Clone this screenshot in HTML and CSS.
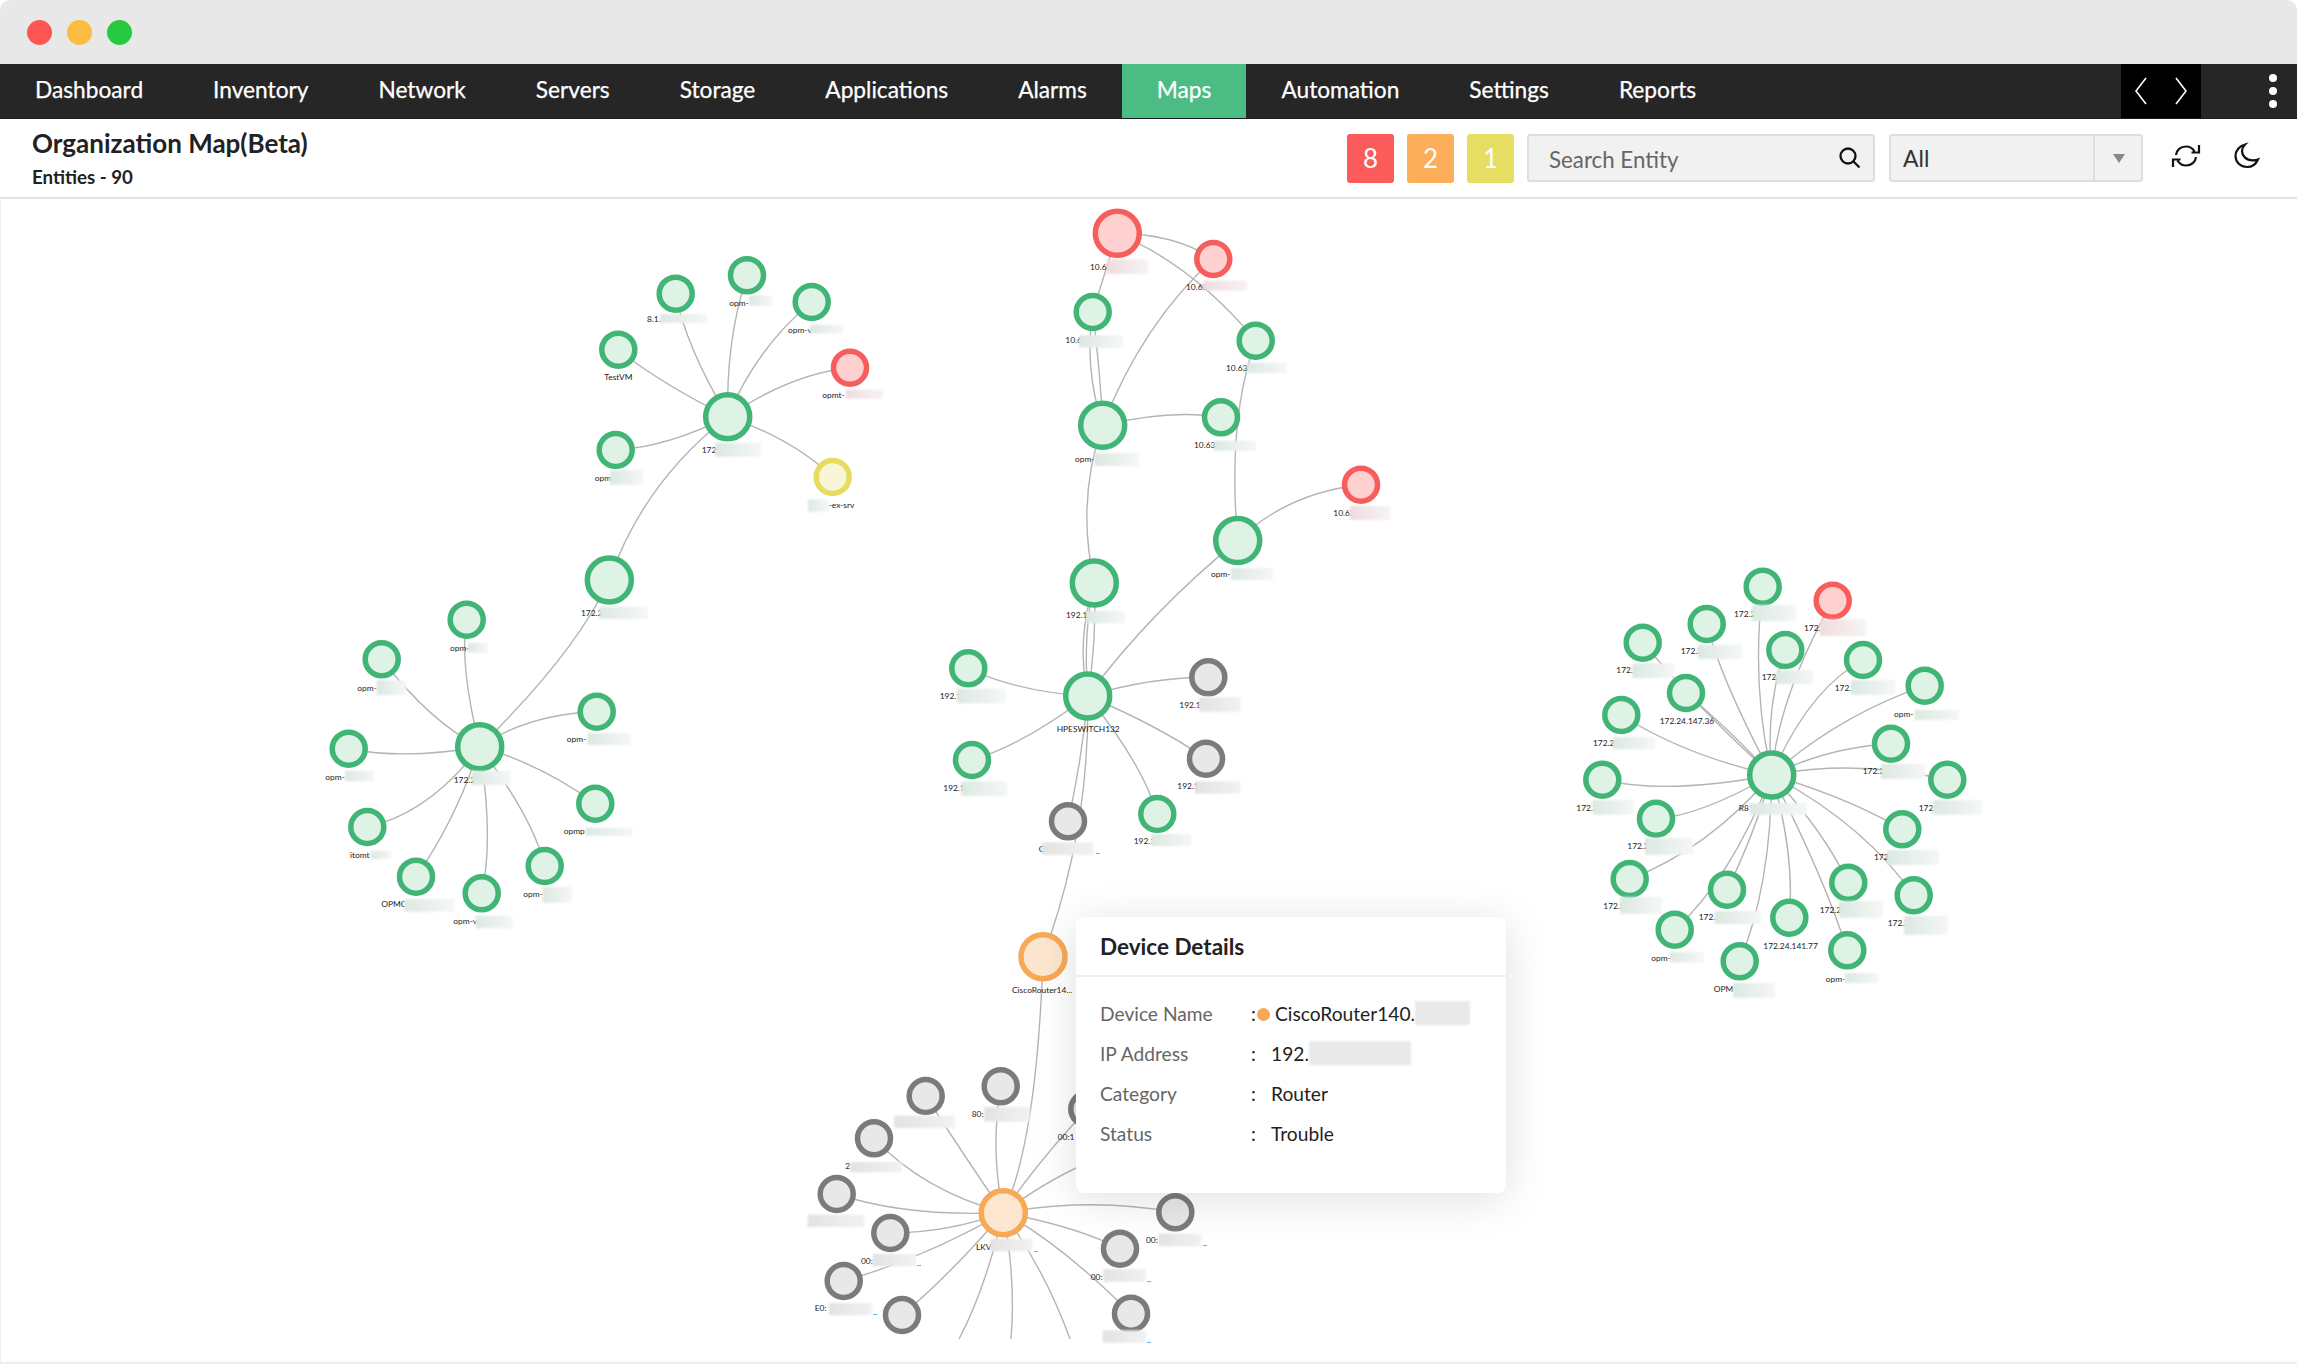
FILE: index.html
```html
<!DOCTYPE html>
<html lang="en">
<head>
<meta charset="utf-8">
<title>Organization Map(Beta)</title>
<link rel="stylesheet" href="styles.css">
</head>
<body>
<div class="window">
  <header class="titlebar">
    <span class="light light-red"></span>
    <span class="light light-amber"></span>
    <span class="light light-green"></span>
  </header>
  <nav class="nav">
    <a class="nav-item">Dashboard</a>
    <a class="nav-item">Inventory</a>
    <a class="nav-item">Network</a>
    <a class="nav-item">Servers</a>
    <a class="nav-item">Storage</a>
    <a class="nav-item">Applications</a>
    <a class="nav-item">Alarms</a>
    <a class="nav-item nav-active">Maps</a>
    <a class="nav-item">Automation</a>
    <a class="nav-item">Settings</a>
    <a class="nav-item">Reports</a>
    <div class="nav-arrows">
      <svg class="chev" viewBox="0 0 16 32"><path d="M13 3 3 16l10 13"/></svg>
      <svg class="chev" viewBox="0 0 16 32"><path d="M3 3l10 13L3 29"/></svg>
    </div>
    <div class="nav-more"><i></i><i></i><i></i></div>
  </nav>
  <section class="toolbar">
    <div class="heading">
      <h1 class="title">Organization Map(Beta)</h1>
      <p class="count">Entities - 90</p>
    </div>
    <div class="tools">
      <span class="badge badge-red">8</span>
      <span class="badge badge-orange">2</span>
      <span class="badge badge-yellow">1</span>
      <div class="search">
        <span>Search Entity</span>
        <svg class="search-icon" viewBox="0 0 22 22"><circle cx="9" cy="9" r="7.500"/><path d="M14.500 14.500 20.500 20.500"/></svg>
      </div>
      <div class="select">
        <span class="select-value">All</span>
        <span class="select-caret"></span>
      </div>
      <svg class="tool-icon refresh" viewBox="0 0 30 30"><path d="M5 14C5.500 9 9.500 5.500 15 5.500c3.500 0 6.500 1.500 8.500 5M25 16c-.5 5-4.500 8.500-10 8.500-3.500 0-6.500-1.500-8.500-5M28 4v7.500h-7.500M2 26v-7.500h7.500"/></svg>
      <svg class="tool-icon moon" viewBox="0 0 30 30"><path d="M13 3.500C7.500 5 3.500 9.500 3.500 15c0 6 5 11 11.500 11 5.500 0 9-3 11-7.500-2 .8-4 .8-5.500.8C14 19.300 10 14.500 10 10c0-2.500 1-4.500 3-6.500z"/></svg>
    </div>
  </section>
  <main class="map">
    <svg class="graph" viewBox="0 199 2297 1165" xmlns="http://www.w3.org/2000/svg">
      <defs>
        <linearGradient id="fade-g" x1="0" x2="1" y1="0" y2="0"><stop offset="0" stop-color="#dce8e2"/><stop offset="1" stop-color="#f5f7f6"/></linearGradient>
        <linearGradient id="fade-r" x1="0" x2="1" y1="0" y2="0"><stop offset="0" stop-color="#f0dcdd"/><stop offset="1" stop-color="#f6f4f4"/></linearGradient>
        <linearGradient id="fade-k" x1="0" x2="1" y1="0" y2="0"><stop offset="0" stop-color="#e2e2e2"/><stop offset="1" stop-color="#f2f2f2"/></linearGradient>
        <filter id="soft"><feGaussianBlur stdDeviation="1"/></filter>
      </defs>

      <g class="edges">
        <!-- top-left cluster -->
        <path d="M675.700 293.700Q685 345 727.700 416.700"/>
        <path d="M747 275.300Q726 340 727.700 416.700"/>
        <path d="M811.700 302Q757 347 727.700 416.700"/>
        <path d="M618.300 349.700Q660 383 727.700 416.700"/>
        <path d="M850 367.700Q790 374 727.700 416.700"/>
        <path d="M615.700 450Q668 447 727.700 416.700"/>
        <path d="M832.700 477Q793 439 727.700 416.700"/>
        <path d="M727.700 416.700Q643.500 482 609.300 580"/>
        <path d="M609.300 580Q575.500 653 479.700 746.700"/>
        <!-- left cluster -->
        <path d="M466.700 619.700Q459 664 479.700 746.700"/>
        <path d="M381.700 659.300Q431 723 479.700 746.700"/>
        <path d="M348.700 748.700Q406 760 479.700 746.700"/>
        <path d="M367.300 827Q430 813 479.700 746.700"/>
        <path d="M416 876.700Q456 820 479.700 746.700"/>
        <path d="M481.700 893.300Q494 840 479.700 746.700"/>
        <path d="M544.700 866Q534 820 479.700 746.700"/>
        <path d="M595.300 803.700Q543 765 479.700 746.700"/>
        <path d="M596.700 711.700Q528 714 479.700 746.700"/>
        <!-- centre chain -->
        <path d="M1117.300 233.300Q1175 234 1213.300 259"/>
        <path d="M1117.300 233.300Q1194 266 1255.700 340.700"/>
        <path d="M1117.300 233.300L1092.700 312"/>
        <path d="M1213.300 259Q1142 324 1102.700 425.300"/>
        <path d="M1092.700 312Q1084 368 1102.700 425.300"/>
        <path d="M1092.700 312Q1100 368 1102.700 425.300"/>
        <path d="M1102.700 425.300Q1171 409 1221 417.300"/>
        <path d="M1255.700 340.700Q1227 420 1237.700 540.600"/>
        <path d="M1237.700 540.600Q1287 493 1361 484.700"/>
        <path d="M1102.700 425.300Q1076 500 1094.300 583"/>
        <path d="M1094.300 583Q1076 640 1087.700 696"/>
        <path d="M1094.300 583Q1097 640 1087.700 696"/>
        <path d="M1094.300 583Q1083 630 1087.700 696"/>
        <path d="M1237.700 540.600Q1150 612 1087.700 696"/>
        <path d="M1087.700 696Q1018 692 968.300 668.300"/>
        <path d="M1087.700 696Q1023 745 972 760"/>
        <path d="M1087.700 696Q1082 760 1068 821.300"/>
        <path d="M1087.700 696Q1090 830 1043 956.700"/>
        <path d="M1087.700 696Q1143 765 1157.300 814"/>
        <path d="M1087.700 696Q1159 726 1206 758.700"/>
        <path d="M1087.700 696Q1152 677 1208.300 677.300"/>
        <path d="M1043 956.700Q1037 1141 1003.300 1212.700"/>
        <!-- bottom cluster -->
        <path d="M1003.300 1212.700Q967 1160 925.700 1096"/>
        <path d="M1003.300 1212.700Q990 1150 1000.700 1086.300"/>
        <path d="M1003.300 1212.700Q1035 1165 1087.300 1109"/>
        <path d="M1003.300 1212.700Q1060 1170 1120 1150"/>
        <path d="M1003.300 1212.700Q922 1190 874 1138.300"/>
        <path d="M1003.300 1212.700Q906 1217 836.700 1194"/>
        <path d="M1003.300 1212.700Q947 1233 890.300 1233"/>
        <path d="M1003.300 1212.700Q925 1258 843.700 1281"/>
        <path d="M1003.300 1212.700Q950 1275 902 1315"/>
        <path d="M1003.300 1212.700Q985 1290 959 1339"/>
        <path d="M1003.300 1212.700Q1016 1280 1011 1339"/>
        <path d="M1003.300 1212.700Q1045 1270 1070 1339"/>
        <path d="M1003.300 1212.700Q1078 1227 1120 1248.700"/>
        <path d="M1003.300 1212.700Q1091 1197 1175.300 1212.300"/>
        <path d="M1003.300 1212.700Q1060 1243 1131 1313.700"/>
        <!-- right cluster -->
        <path d="M1762.700 586.700Q1751 685 1771.700 775"/>
        <path d="M1832.700 600.700Q1778 698 1771.700 775"/>
        <path d="M1706.700 624Q1721 680 1771.700 775"/>
        <path d="M1785.300 650Q1765 708 1771.700 775"/>
        <path d="M1642.700 642.700Q1700 710 1771.700 775"/>
        <path d="M1686 693Q1730 730 1771.700 775"/>
        <path d="M1863 660Q1809 689 1771.700 775"/>
        <path d="M1924.700 685.700Q1838 716 1771.700 775"/>
        <path d="M1621.300 715Q1683.500 755 1771.700 775"/>
        <path d="M1891 743.700Q1829 747 1771.700 775"/>
        <path d="M1602.300 779.700Q1666 795 1771.700 775"/>
        <path d="M1947.300 779.700Q1854 759 1771.700 775"/>
        <path d="M1656 818.700Q1699.600 816 1771.700 775"/>
        <path d="M1902.300 829.300Q1849 798 1771.700 775"/>
        <path d="M1629.700 879Q1707 850 1771.700 775"/>
        <path d="M1727 889.700Q1752 840 1771.700 775"/>
        <path d="M1848.300 882.700Q1823 830 1771.700 775"/>
        <path d="M1913.700 895.300Q1865 825 1771.700 775"/>
        <path d="M1789.300 917.700Q1795 854 1771.700 775"/>
        <path d="M1847.300 950.300Q1824 877 1771.700 775"/>
        <path d="M1739.700 961.300Q1771 886 1771.700 775"/>
        <path d="M1674.700 929.700Q1730 880 1771.700 775"/>
      </g>

      <g class="nodes">
        <circle class="hub green" cx="727.700" cy="416.700" r="22"/>
        <circle class="sat green" cx="675.700" cy="293.700" r="16.500"/>
        <circle class="sat green" cx="747" cy="275.300" r="16.500"/>
        <circle class="sat green" cx="811.700" cy="302" r="16.500"/>
        <circle class="sat green" cx="618.300" cy="349.700" r="16.500"/>
        <circle class="sat red" cx="850" cy="367.700" r="16.500"/>
        <circle class="sat green" cx="615.700" cy="450" r="16.500"/>
        <circle class="sat yellow" cx="832.700" cy="477" r="16.500"/>
        <circle class="hub green" cx="609.300" cy="580" r="22"/>

        <circle class="hub green" cx="479.700" cy="746.700" r="22"/>
        <circle class="sat green" cx="466.700" cy="619.700" r="16.500"/>
        <circle class="sat green" cx="381.700" cy="659.300" r="16.500"/>
        <circle class="sat green" cx="348.700" cy="748.700" r="16.500"/>
        <circle class="sat green" cx="367.300" cy="827" r="16.500"/>
        <circle class="sat green" cx="416" cy="876.700" r="16.500"/>
        <circle class="sat green" cx="481.700" cy="893.300" r="16.500"/>
        <circle class="sat green" cx="544.700" cy="866" r="16.500"/>
        <circle class="sat green" cx="595.300" cy="803.700" r="16.500"/>
        <circle class="sat green" cx="596.700" cy="711.700" r="16.500"/>

        <circle class="hub red" cx="1117.300" cy="233.300" r="22"/>
        <circle class="sat red" cx="1213.300" cy="259" r="16.500"/>
        <circle class="sat green" cx="1092.700" cy="312" r="16.500"/>
        <circle class="sat green" cx="1255.700" cy="340.700" r="16.500"/>
        <circle class="hub green" cx="1102.700" cy="425.300" r="22"/>
        <circle class="sat green" cx="1221" cy="417.300" r="16.500"/>
        <circle class="hub green" cx="1237.700" cy="540.600" r="22"/>
        <circle class="sat red" cx="1361" cy="484.700" r="16.500"/>
        <circle class="hub green" cx="1094.300" cy="583" r="22"/>
        <circle class="hub green" cx="1087.700" cy="696" r="22"/>
        <circle class="sat green" cx="968.300" cy="668.300" r="16.500"/>
        <circle class="sat green" cx="972" cy="760" r="16.500"/>
        <circle class="sat gray" cx="1068" cy="821.300" r="16.500"/>
        <circle class="sat green" cx="1157.300" cy="814" r="16.500"/>
        <circle class="sat gray" cx="1206" cy="758.700" r="16.500"/>
        <circle class="sat gray" cx="1208.300" cy="677.300" r="16.500"/>
        <circle class="hub orange" cx="1043" cy="956.700" r="22"/>

        <circle class="hub orange" cx="1003.300" cy="1212.700" r="22"/>
        <circle class="sat gray" cx="925.700" cy="1096" r="16.500"/>
        <circle class="sat gray" cx="1000.700" cy="1086.300" r="16.500"/>
        <circle class="sat gray" cx="1087.300" cy="1109" r="16.500"/>
        <circle class="sat gray" cx="874" cy="1138.300" r="16.500"/>
        <circle class="sat gray" cx="836.700" cy="1194" r="16.500"/>
        <circle class="sat gray" cx="890.300" cy="1233" r="16.500"/>
        <circle class="sat gray" cx="843.700" cy="1281" r="16.500"/>
        <circle class="sat gray" cx="902" cy="1315" r="16.500"/>
        <circle class="sat gray" cx="1120" cy="1248.700" r="16.500"/>
        <circle class="sat gray" cx="1175.300" cy="1212.300" r="16.500"/>
        <circle class="sat gray" cx="1131" cy="1313.700" r="16.500"/>

        <circle class="hub green" cx="1771.700" cy="775" r="22"/>
        <circle class="sat green" cx="1762.700" cy="586.700" r="16.500"/>
        <circle class="sat red" cx="1832.700" cy="600.700" r="16.500"/>
        <circle class="sat green" cx="1706.700" cy="624" r="16.500"/>
        <circle class="sat green" cx="1785.300" cy="650" r="16.500"/>
        <circle class="sat green" cx="1642.700" cy="642.700" r="16.500"/>
        <circle class="sat green" cx="1863" cy="660" r="16.500"/>
        <circle class="sat green" cx="1924.700" cy="685.700" r="16.500"/>
        <circle class="sat green" cx="1686" cy="693" r="16.500"/>
        <circle class="sat green" cx="1621.300" cy="715" r="16.500"/>
        <circle class="sat green" cx="1891" cy="743.700" r="16.500"/>
        <circle class="sat green" cx="1602.300" cy="779.700" r="16.500"/>
        <circle class="sat green" cx="1947.300" cy="779.700" r="16.500"/>
        <circle class="sat green" cx="1656" cy="818.700" r="16.500"/>
        <circle class="sat green" cx="1902.300" cy="829.300" r="16.500"/>
        <circle class="sat green" cx="1629.700" cy="879" r="16.500"/>
        <circle class="sat green" cx="1727" cy="889.700" r="16.500"/>
        <circle class="sat green" cx="1848.300" cy="882.700" r="16.500"/>
        <circle class="sat green" cx="1913.700" cy="895.300" r="16.500"/>
        <circle class="sat green" cx="1789.300" cy="917.700" r="16.500"/>
        <circle class="sat green" cx="1674.700" cy="929.700" r="16.500"/>
        <circle class="sat green" cx="1847.300" cy="950.300" r="16.500"/>
        <circle class="sat green" cx="1739.700" cy="961.300" r="16.500"/>
      </g>

      <g class="labels">
        <text x="647" y="318.700">8.1.</text>
        <text x="729.300" y="303">opm-</text>
        <text x="788" y="330">opm-v</text>
        <text x="604.300" y="377">TestVM</text>
        <text x="822.300" y="395.300">opmt-</text>
        <text x="594.700" y="477.700">opm</text>
        <text x="828.700" y="505">-ex-srv</text>
        <text x="701.700" y="450.300">172</text>
        <text x="581" y="612.700">172.2</text>

        <text x="450" y="647.700">opm-</text>
        <text x="357.300" y="687.700">opm-</text>
        <text x="325.300" y="776.700">opm-</text>
        <text x="350" y="855">itomt</text>
        <text x="381.300" y="904">OPMC</text>
        <text x="453.300" y="921.300">opm-v</text>
        <text x="523.300" y="894">opm-</text>
        <text x="563.700" y="831">opmp</text>
        <text x="566.700" y="739.300">opm-</text>
        <text x="453.700" y="779.700">172.2</text>

        <text x="1090" y="267">10.63</text>
        <text x="1186" y="286.700">10.63</text>
        <text x="1065.300" y="340">10.63</text>
        <text x="1226" y="368.300">10.63</text>
        <text x="1075" y="458.700">opm-</text>
        <text x="1194" y="445">10.63</text>
        <text x="1211" y="574">opm-</text>
        <text x="1333.300" y="512.700">10.63</text>
        <text x="1066" y="615.300">192.1</text>
        <text x="1056.700" y="729.300">HPESWITCH132</text>
        <text x="939.700" y="696">192.1</text>
        <text x="943.300" y="787.700">192.1</text>
        <text x="1038.700" y="849">C</text>
        <text x="1096" y="851">..</text>
        <text x="1133.700" y="841">192.1</text>
        <text x="1177.300" y="786.300">192.1</text>
        <text x="1179.300" y="705">192.1</text>
        <text x="1012" y="990.300">CiscoRouter14...</text>

        <text x="976" y="1246.700">LKV</text>
        <text x="1034" y="1249">..</text>
        <text x="971.700" y="1113.700">80:</text>
        <text x="1057.700" y="1137">00:1</text>
        <text x="845.300" y="1166">2</text>
        <text x="861" y="1260.700">00:</text>
        <text x="917" y="1263">..</text>
        <text x="814.700" y="1308.300">E0:</text>
        <text x="873" y="1312">..</text>
        <text x="1090.700" y="1276.700">00:</text>
        <text x="1147" y="1279">..</text>
        <text x="1146" y="1240">00:</text>
        <text x="1203" y="1243">..</text>
        <text x="1147" y="1340">..</text>

        <text x="1734" y="614">172.2</text>
        <text x="1804" y="628">172.2</text>
        <text x="1680.700" y="651">172.2</text>
        <text x="1761.700" y="677">172.2</text>
        <text x="1616.300" y="670">172.2</text>
        <text x="1834.700" y="688">172.2</text>
        <text x="1894" y="714">opm-</text>
        <text x="1659.700" y="720.700">172.24.147.36</text>
        <text x="1593" y="743">172.2</text>
        <text x="1862.700" y="771">172.2</text>
        <text x="1576.300" y="807.700">172.2</text>
        <text x="1918.700" y="807.700">172.2</text>
        <text x="1627.300" y="845.700">172.2</text>
        <text x="1874" y="857">172.2</text>
        <text x="1738.700" y="807.700">R8</text>
        <text x="1603.300" y="906">172.2</text>
        <text x="1698.700" y="917">172.2</text>
        <text x="1819.700" y="910">172.2</text>
        <text x="1887.700" y="923">172.2</text>
        <text x="1763.300" y="945.700">172.24.141.77</text>
        <text x="1651.300" y="958">opm-</text>
        <text x="1825.700" y="978.700">opm-</text>
        <text x="1713.700" y="989">OPM</text>
      </g>

      <g class="masks">
        <rect class="mask-g" x="660" y="314" width="47" height="9"/>
        <rect class="mask-g" x="749" y="295.300" width="23" height="10.400"/>
        <rect class="mask-g" x="810" y="324.700" width="33.300" height="8.600"/>
        <rect class="mask-r" x="845.700" y="389.700" width="37.600" height="9"/>
        <rect class="mask-g" x="610" y="470" width="33.300" height="14.700"/>
        <rect class="mask-g" x="808" y="499.300" width="20.700" height="12.400"/>
        <rect class="mask-g" x="715" y="442.700" width="46.300" height="14"/>
        <rect class="mask-g" x="599.300" y="606.700" width="48.700" height="12.300"/>

        <rect class="mask-g" x="467.700" y="642.700" width="20" height="10"/>
        <rect class="mask-g" x="376.700" y="680" width="29.300" height="15"/>
        <rect class="mask-g" x="345" y="770.700" width="29" height="10.600"/>
        <rect class="mask-g" x="370.700" y="850.700" width="20.600" height="8.300"/>
        <rect class="mask-g" x="404" y="899" width="50.300" height="12.700"/>
        <rect class="mask-g" x="475.700" y="915.700" width="37" height="12.600"/>
        <rect class="mask-g" x="542.700" y="886.700" width="29.300" height="16"/>
        <rect class="mask-g" x="585.700" y="827.700" width="47" height="8"/>
        <rect class="mask-g" x="587.300" y="733" width="43.400" height="12"/>
        <rect class="mask-g" x="472" y="771" width="39" height="14"/>

        <rect class="mask-r" x="1106.700" y="259.300" width="41.600" height="14.700"/>
        <rect class="mask-r" x="1203.300" y="280.700" width="44" height="10"/>
        <rect class="mask-g" x="1079" y="335.300" width="44.300" height="12.400"/>
        <rect class="mask-g" x="1246.700" y="362.700" width="40.300" height="10.300"/>
        <rect class="mask-g" x="1094.300" y="453" width="44" height="13"/>
        <rect class="mask-g" x="1214" y="440.700" width="42" height="10.300"/>
        <rect class="mask-g" x="1231" y="568" width="42" height="12"/>
        <rect class="mask-r" x="1350" y="506" width="40.700" height="14"/>
        <rect class="mask-g" x="1086" y="611" width="39" height="12.300"/>
        <rect class="mask-g" x="957" y="688.700" width="48.300" height="14.600"/>
        <rect class="mask-g" x="961.300" y="781.300" width="46" height="14.400"/>
        <rect class="mask-k" x="1042" y="842.300" width="51.700" height="12.400"/>
        <rect class="mask-g" x="1151" y="834" width="39.700" height="12"/>
        <rect class="mask-k" x="1195" y="781.300" width="45.700" height="12.400"/>
        <rect class="mask-k" x="1199" y="697.300" width="41.700" height="14.400"/>

        <rect class="mask-k" x="990" y="1238.700" width="42.700" height="12.600"/>
        <rect class="mask-k" x="894" y="1115.700" width="60.700" height="12.300"/>
        <rect class="mask-k" x="984.300" y="1107" width="45.700" height="14.700"/>
        <rect class="mask-k" x="850" y="1162" width="52" height="10.300"/>
        <rect class="mask-k" x="807.700" y="1214.700" width="56.600" height="12.300"/>
        <rect class="mask-k" x="872.700" y="1254" width="43.300" height="12.300"/>
        <rect class="mask-k" x="829" y="1303" width="42.700" height="12.300"/>
        <rect class="mask-k" x="1103.300" y="1269" width="42.700" height="12.700"/>
        <rect class="mask-k" x="1158.300" y="1233.700" width="43" height="12.600"/>
        <rect class="mask-k" x="1102.700" y="1330.300" width="43.300" height="12.400"/>

        <rect class="mask-g" x="1752" y="605" width="44" height="16"/>
        <rect class="mask-r" x="1820" y="619.300" width="46" height="16.700"/>
        <rect class="mask-g" x="1697.700" y="644.700" width="44.300" height="14.300"/>
        <rect class="mask-g" x="1776" y="670" width="37" height="14"/>
        <rect class="mask-g" x="1632.300" y="663.300" width="42" height="14.700"/>
        <rect class="mask-g" x="1851" y="680" width="44.300" height="14.700"/>
        <rect class="mask-g" x="1914.700" y="710" width="44.300" height="10"/>
        <rect class="mask-g" x="1613" y="737" width="42.300" height="12.300"/>
        <rect class="mask-g" x="1881" y="764" width="44" height="15"/>
        <rect class="mask-g" x="1592.700" y="800" width="41.300" height="14.700"/>
        <rect class="mask-g" x="1933" y="800" width="48.700" height="14.700"/>
        <rect class="mask-g" x="1645" y="838" width="48" height="16.700"/>
        <rect class="mask-g" x="1887" y="850" width="52" height="15"/>
        <rect class="mask-g" x="1620" y="897" width="41.700" height="16.700"/>
        <rect class="mask-g" x="1714.700" y="911" width="46.300" height="13"/>
        <rect class="mask-g" x="1839" y="901" width="43.700" height="16.700"/>
        <rect class="mask-g" x="1904" y="916" width="44" height="18.700"/>
        <rect class="mask-g" x="1670" y="952" width="33.700" height="10.300"/>
        <rect class="mask-g" x="1845" y="973" width="33" height="10"/>
        <rect class="mask-g" x="1733" y="983" width="42" height="14.700"/>
        <rect class="mask-g" x="1750" y="803" width="57" height="12"/>
      </g>
    </svg>

    <aside class="popup">
      <h2 class="popup-title">Device Details</h2>
      <dl class="popup-body">
        <div class="popup-row">
          <dt>Device Name</dt>
          <dd class="popup-first"><span class="colon">:</span><span class="status-dot"></span>CiscoRouter140.<span class="redact redact-name"></span></dd>
        </div>
        <div class="popup-row">
          <dt>IP Address</dt>
          <dd><span class="colon colon-gap">:</span>192.<span class="redact redact-ip"></span></dd>
        </div>
        <div class="popup-row">
          <dt>Category</dt>
          <dd><span class="colon colon-gap">:</span>Router</dd>
        </div>
        <div class="popup-row">
          <dt>Status</dt>
          <dd><span class="colon colon-gap">:</span>Trouble</dd>
        </div>
      </dl>
    </aside>
  </main>
</div>
</body>
</html>
```
FILE: styles.css
```css
* { box-sizing: border-box; }
html, body { margin: 0; height: 100%; background: #fff; }
body { font-family: Lato, "Open Sans", sans-serif; overflow: hidden; }

.window {
  display: flex;
  flex-direction: column;
  width: 2297px;
  height: 1364px;
  border-radius: 10px 10px 0 0;
  overflow: hidden;
}

.titlebar {
  flex: 0 0 64px;
  display: flex;
  align-items: center;
  gap: 15px;
  padding: 0 27px;
  background: #e8e8e8;
}
.light { width: 25px; height: 25px; border-radius: 50%; }
.light-red { background: #fc5753; }
.light-amber { background: #fdbc40; }
.light-green { background: #27c93f; }

.nav {
  flex: 0 0 55px;
  display: flex;
  align-items: stretch;
  background: #262626;
  border-bottom: 1px solid #1a1a1a;
}
.nav-item {
  display: flex;
  align-items: center;
  padding: 0 35px 3px;
  color: #fff;
  font-size: 22.700px;
  -webkit-text-stroke: 0.25px #fff;
}
.nav-active { background: #4cbc85; }
.nav-arrows {
  display: flex;
  align-items: center;
  justify-content: space-between;
  width: 80px;
  margin-left: auto;
  padding: 0 12px;
  background: #000;
}
.chev { width: 16px; height: 32px; }
.chev path { fill: none; stroke: #fff; stroke-width: 1.6; }
.nav-more {
  display: flex;
  flex-direction: column;
  align-items: center;
  justify-content: center;
  gap: 5px;
  width: 96px;
  padding-left: 48px;
}
.nav-more i { width: 8px; height: 8px; border-radius: 50%; background: #fff; }

.toolbar {
  flex: 0 0 80px;
  display: flex;
  align-items: center;
  justify-content: space-between;
  padding: 0 35.500px 0 32px;
  background: #fff;
  border-bottom: 2px solid #e2e2e2;
}
.heading { margin-bottom: 3px; }
.title {
  margin: 0 0 6px;
  color: #222;
  font-size: 26px;
  font-weight: 700;
  line-height: 34px;
}
.count {
  margin: 0;
  color: #222;
  font-size: 18.700px;
  font-weight: 700;
  line-height: 22px;
}
.tools { display: flex; align-items: center; }
.badge {
  display: flex;
  align-items: center;
  justify-content: center;
  width: 47px;
  height: 49px;
  margin-right: 13px;
  border-radius: 3px;
  color: #fff;
  font-size: 26px;
}
.badge-red { background: #fc5b5b; }
.badge-orange { background: #fcae5a; }
.badge-yellow { background: #e6de63; }
.search {
  display: flex;
  align-items: center;
  justify-content: space-between;
  width: 348px;
  height: 48px;
  margin-right: 14px;
  padding: 0 12px 0 20px;
  background: #f1f1f1;
  border: 2px solid #dedede;
  border-radius: 3px;
  color: #666;
  font-size: 22.300px;
}
.search span { padding-top: 2px; }
.search-icon { width: 22px; height: 22px; }
.search-icon circle, .search-icon path { fill: none; stroke: #111; stroke-width: 2.300; }
.select {
  display: flex;
  align-items: stretch;
  width: 254px;
  height: 48px;
  margin-right: 27.500px;
  background: #f1f1f1;
  border: 2px solid #dedede;
  border-radius: 3px;
  color: #333;
  font-size: 23px;
}
.select-value { flex: 1; display: flex; align-items: center; padding-left: 12px; }
.select-caret {
  position: relative;
  flex: 0 0 48px;
  border-left: 2px solid #dedede;
}
.select-caret::after {
  content: "";
  position: absolute;
  top: 18px;
  left: 18px;
  border: 6px solid transparent;
  border-top: 9px solid #888;
  border-bottom: 0;
}
.tool-icon { width: 30px; height: 30px; margin-bottom: 5px; }
.tool-icon path { fill: none; stroke: #111; stroke-width: 2.200; }
.refresh { margin-right: 31px; }

.map {
  position: relative;
  flex: 1;
  min-height: 0;
  background: #fff;
  border-left: 1px solid #efefef;
  border-bottom: 2px solid #eeeeee;
}
.graph { display: block; width: 2297px; height: 1165px; margin-left: -1px; }
.edges path { fill: none; stroke: #b4b4b4; stroke-width: 1.400; }
.nodes circle { stroke-width: 5.500; }
.green { fill: #dff2e6; stroke: #41b576; }
.red { fill: #ffd0d0; stroke: #f65d5d; }
.orange { fill: #fde6d0; stroke: #f7a955; }
.yellow { fill: #f8f5d9; stroke: #e6dc60; }
.gray { fill: #e8e8e8; stroke: #7b7b7b; }
.mask-g { fill: url(#fade-g); filter: url(#soft); }
.mask-r { fill: url(#fade-r); filter: url(#soft); }
.mask-k { fill: url(#fade-k); filter: url(#soft); }
.labels text {
  fill: #222;
  font-family: Lato, sans-serif;
  font-size: 8.400px;
  dominant-baseline: central;
}

.popup {
  position: absolute;
  left: 1075px;
  top: 718px;
  width: 430px;
  height: 276px;
  background: #fff;
  border-radius: 8px;
  box-shadow: 0 6px 44px rgba(0, 0, 0, 0.13);
}
.popup-title {
  margin: 0;
  height: 60px;
  padding: 0 24px;
  border-bottom: 2px solid #f0f0f0;
  color: #222;
  font-size: 22.500px;
  font-weight: 700;
  line-height: 60px;
}
.popup-body { margin: 16px 0 0; padding: 0 24px; }
.popup-row { display: flex; align-items: center; height: 40px; font-size: 19.200px; }
.popup-row dt { flex: 0 0 151px; color: #666; }
.popup-row dd { display: flex; align-items: center; margin: 0; color: #222; }
.colon { display: inline-block; width: 4px; }
.colon-gap { width: 20px; }
.status-dot {
  width: 13px;
  height: 13px;
  margin: 2px 5px 0 2px;
  border-radius: 50%;
  background: #f7a955;
}
.redact { display: inline-block; height: 24px; background: #e9e9e9; filter: blur(1px); }
.redact-name { width: 55px; }
.redact-ip { width: 102px; }
```
